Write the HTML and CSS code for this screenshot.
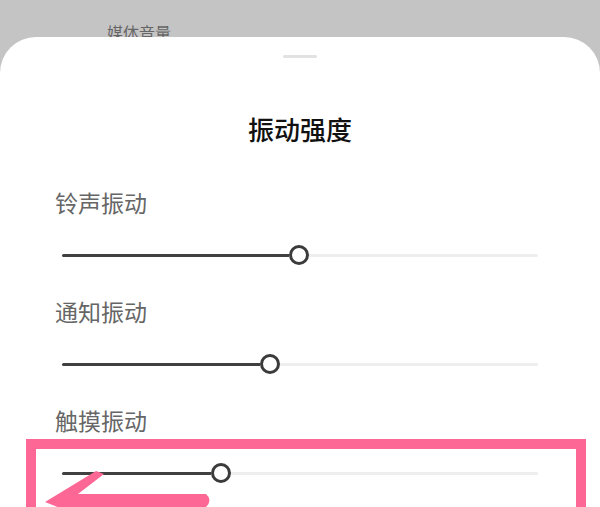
FILE: index.html
```html
<!DOCTYPE html>
<html lang="zh">
<head>
    <meta charset="UTF-8">
    <meta name="viewport" content="width=device-width, initial-scale=1.0">
    <title>振动强度</title>
    <link rel="stylesheet" href="styles.css">
</head>
<body>
    <div class="backdrop">
        <div class="backdrop-item">媒体音量</div>
    </div>

    <div class="sheet">
        <div class="handle"></div>
        <h2 class="sheet-title">振动强度</h2>

        <div class="setting">
            <div class="setting-label">铃声振动</div>
            <div class="slider">
                <div class="slider-fill" style="width: 227px"></div>
                <div class="slider-thumb"></div>
                <div class="slider-rest"></div>
            </div>
        </div>

        <div class="setting">
            <div class="setting-label">通知振动</div>
            <div class="slider">
                <div class="slider-fill" style="width: 198px"></div>
                <div class="slider-thumb"></div>
                <div class="slider-rest"></div>
            </div>
        </div>

        <div class="setting">
            <div class="setting-label">触摸振动</div>
            <div class="mark">
                <div class="slider">
                    <div class="slider-fill" style="width: 149px"></div>
                    <div class="slider-thumb"></div>
                    <div class="slider-rest"></div>
                </div>
            </div>
        </div>
    </div>

    <svg class="arrow" width="200" height="50" viewBox="0 0 200 50">
        <path d="M5 42 L56 11 L64 14 L38 34 L166 34 Q173 40 166 47 L20 48 Z" fill="#fd6795"/>
    </svg>
</body>
</html>
```

FILE: styles.css
```css
body {
    font-family: "Noto Sans CJK SC", "Noto Sans", sans-serif;
    margin: 0;
    width: 600px;
    height: 507px;
    overflow: hidden;
    background-color: #c4c4c4;
    position: relative;
}

.backdrop {
    height: 37px;
    overflow: hidden;
    box-sizing: border-box;
    padding: 24px 0 0 107px;
}

.backdrop-item {
    font-size: 16px;
    line-height: 16px;
    color: #666;
}

.sheet {
    background-color: #ffffff;
    border-radius: 36px 36px 0 0;
    height: 470px;
    padding-top: 18px;
    box-sizing: border-box;
    overflow: hidden;
}

.handle {
    width: 34px;
    height: 3px;
    margin: 0 auto;
    background-color: #e2e2e2;
    border-radius: 2px;
}

.sheet-title {
    margin: 58px 0 49px;
    font-size: 26px;
    line-height: 26px;
    font-weight: 500;
    text-align: center;
    color: #111;
}

.setting {
    padding: 0 62px 0 55px;
    height: 109px;
}

.setting-label {
    font-size: 23px;
    line-height: 23px;
    color: #666;
}

.slider {
    display: flex;
    align-items: center;
    height: 20px;
    margin: 31px 0 0 7px;
}

.slider-fill {
    height: 3px;
    background-color: #404040;
    border-radius: 2px 0 0 2px;
    flex: none;
}

.slider-thumb {
    width: 20px;
    height: 20px;
    box-sizing: border-box;
    border: 3.5px solid #3b3b3b;
    border-radius: 50%;
    background-color: #fff;
    flex: none;
}

.slider-rest {
    flex: 1;
    height: 3px;
    background-color: #eeeeee;
    border-radius: 0 2px 2px 0;
}

.mark {
    margin: 7px -48px 0 -29px;
    border: 10px solid #fd6795;
    border-bottom: none;
    padding: 14px 38px 25px 19px;
}

.mark .slider {
    margin-top: 0;
}

.arrow {
    position: absolute;
    left: 40px;
    top: 460px;
}
```
